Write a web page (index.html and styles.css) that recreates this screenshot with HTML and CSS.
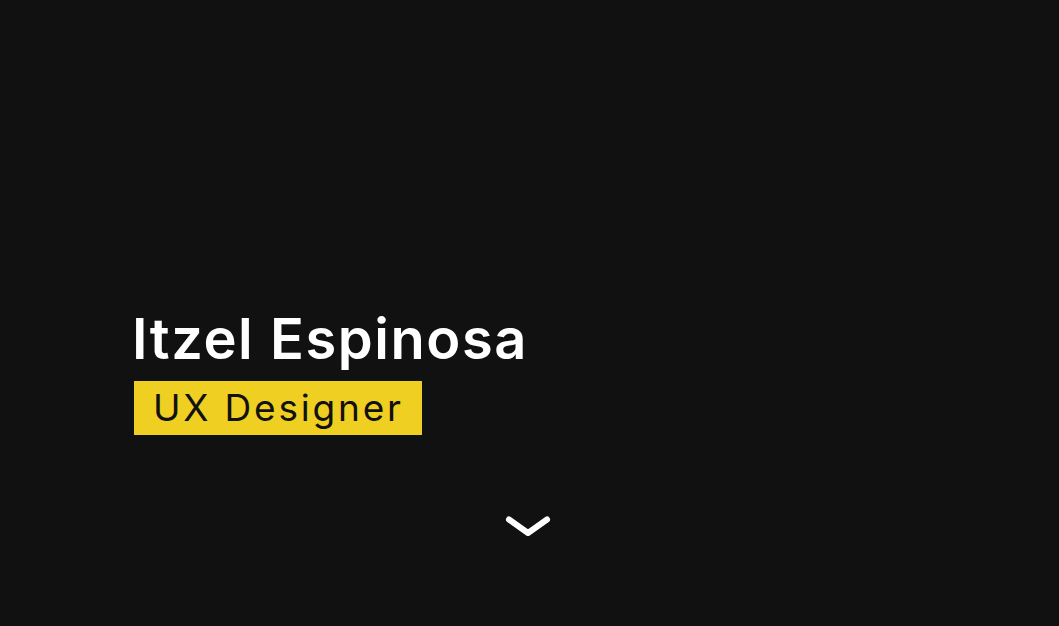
FILE: index.html
```html
<!DOCTYPE html>
<html lang="en">
<head>
<meta charset="utf-8">
<title>Itzel Espinosa</title>
<link rel="stylesheet" href="styles.css">
</head>
<body>
<section class="hero">
  <div class="intro">
    <h1 class="name">Itzel Espinosa</h1>
    <p class="role">UX Designer</p>
  </div>
  <a class="scroll" href="#about" aria-label="Scroll down">
    <svg width="48" height="26" viewBox="0 0 48 26"><path d="M5 4.5 L24 18 L43 4.5" fill="none" stroke="#fff" stroke-width="6" stroke-linecap="round" stroke-linejoin="round"/></svg>
  </a>
</section>
</body>
</html>
```
FILE: styles.css
```css
html, body {
  margin: 0;
  padding: 0;
  background: #111111;
}
body {
  font-family: Inter, "Noto Sans", sans-serif;
  color: #ffffff;
}
.hero {
  height: 626px;
  display: flex;
  flex-direction: column;
  box-sizing: border-box;
  padding-top: 306px;
}
.intro {
  padding-left: 132px;
  display: flex;
  flex-direction: column;
  align-items: flex-start;
}
.name {
  margin: 0;
  font-size: 56px;
  font-weight: 600;
  line-height: 66px;
  letter-spacing: 1.55px;
}
.role {
  margin: 9px 0 0 2px;
  background: #efcf21;
  color: #111111;
  font-size: 37px;
  font-weight: 400;
  line-height: 54px;
  letter-spacing: 2.8px;
  padding: 0 18px 0 19px;
}
.scroll {
  align-self: center;
  margin-top: 80px;
  margin-left: -4px;
  display: block;
  line-height: 0;
}
```
